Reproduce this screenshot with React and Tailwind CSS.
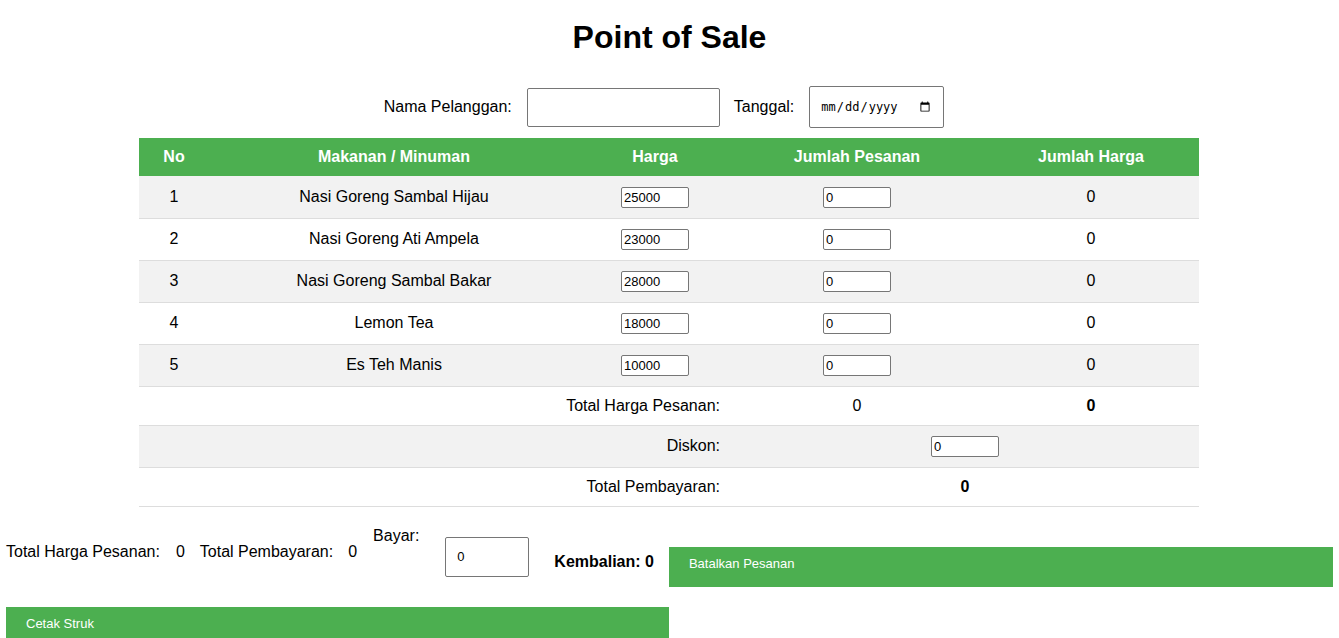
import { useState } from "react";

const menu = [
  { nama: "Nasi Goreng Sambal Hijau", harga: 25000 },
  { nama: "Nasi Goreng Ati Ampela", harga: 23000 },
  { nama: "Nasi Goreng Sambal Bakar", harga: 28000 },
  { nama: "Lemon Tea", harga: 18000 },
  { nama: "Es Teh Manis", harga: 10000 },
];

const cellInput =
  "w-[68px] h-[21px] border border-[#767676] rounded-[2px] px-[2px] text-[13px] bg-white outline-none";

export default function App() {
  const [harga, setHarga] = useState(menu.map((m) => m.harga));
  const [jumlah, setJumlah] = useState(menu.map(() => 0));
  const [diskon, setDiskon] = useState(0);
  const [bayar, setBayar] = useState(0);

  const subtotal = menu.map((_, i) => Number(harga[i]) * Number(jumlah[i]));
  const totalHarga = subtotal.reduce((a, b) => a + b, 0);
  const totalPesanan = jumlah.reduce((a, b) => a + Number(b), 0);
  const totalBayar = totalHarga - Number(diskon);
  const kembalian = Number(bayar) - totalBayar;

  return (
    <div className="font-['Liberation_Sans',Arial,sans-serif] text-black text-[16px] bg-white min-h-[638px] overflow-hidden">
      <h1 className="text-center text-[32px] font-bold leading-[37px] pt-[19px]">Point of Sale</h1>

      <div className="flex items-center justify-center mt-[30px] h-[42px] pr-[11px]">
        <label className="mr-[15px]">Nama Pelanggan:</label>
        <input type="text" className="w-[193px] h-[39px] border border-[#767676] rounded-[2px] px-2 outline-none" />
        <label className="ml-[14px] mr-[15px]">Tanggal:</label>
        <input
          type="date"
          className="w-[135px] h-[42px] border border-[#767676] rounded-[2px] px-[10px] font-['DejaVu_Sans_Mono',monospace] text-[12px] outline-none"
        />
      </div>

      <table className="ml-[139px] mt-[10px] w-[1060px] table-fixed border-collapse">
        <colgroup>
          <col className="w-[70px]" />
          <col className="w-[370px]" />
          <col className="w-[152px]" />
          <col className="w-[252px]" />
          <col className="w-[216px]" />
        </colgroup>
        <thead>
          <tr className="bg-[#4CAF50] text-white font-bold h-[38px]">
            <th>No</th>
            <th>Makanan / Minuman</th>
            <th>Harga</th>
            <th>Jumlah Pesanan</th>
            <th>Jumlah Harga</th>
          </tr>
        </thead>
        <tbody className="text-center">
          {menu.map((m, i) => (
            <tr key={i} className={`h-[42px] border-b border-[#ddd] ${i % 2 === 0 ? "bg-[#f2f2f2]" : "bg-white"}`}>
              <td>{i + 1}</td>
              <td>{m.nama}</td>
              <td>
                <input
                  type="text"
                  value={harga[i]}
                  onChange={(e) => setHarga(harga.map((h, j) => (j === i ? e.target.value : h)))}
                  className={cellInput}
                />
              </td>
              <td>
                <input
                  type="text"
                  value={jumlah[i]}
                  onChange={(e) => setJumlah(jumlah.map((h, j) => (j === i ? e.target.value : h)))}
                  className={cellInput}
                />
              </td>
              <td>{subtotal[i]}</td>
            </tr>
          ))}
          <tr className="h-[39px] border-b border-[#ddd] bg-white">
            <td colSpan={3} className="text-right pr-[11px]">Total Harga Pesanan:</td>
            <td>{totalPesanan}</td>
            <td className="font-bold">{totalHarga}</td>
          </tr>
          <tr className="h-[42px] border-b border-[#ddd] bg-[#f2f2f2]">
            <td colSpan={3} className="text-right pr-[11px]">Diskon:</td>
            <td colSpan={2}>
              <input type="text" value={diskon} onChange={(e) => setDiskon(e.target.value)} className={cellInput} />
            </td>
          </tr>
          <tr className="h-[39px] border-b border-[#ddd] bg-white">
            <td colSpan={3} className="text-right pr-[11px]">Total Pembayaran:</td>
            <td colSpan={2} className="font-bold">{totalBayar}</td>
          </tr>
        </tbody>
      </table>

      <div className="px-[6px] mt-[19px]">
        <div className="flex items-start whitespace-nowrap">
          <span className="mt-[17px] leading-[18px]">Total Harga Pesanan:</span>
          <span className="mt-[17px] leading-[18px] ml-[16px]">{totalHarga}</span>
          <span className="mt-[17px] leading-[18px] ml-[15px]">Total Pembayaran:</span>
          <span className="mt-[17px] leading-[18px] ml-[15px]">{totalBayar}</span>
          <label className="mt-[1px] leading-[18px] ml-[16px]">Bayar:</label>
          <input
            type="text"
            value={bayar}
            onChange={(e) => setBayar(e.target.value)}
            className="ml-[26px] mt-[11px] w-[84px] h-[40px] border border-[#767676] rounded-[2px] px-[11px] text-[13px] outline-none"
          />
          <span className="ml-[25px] mt-[27px] leading-[18px] font-bold">Kembalian: {kembalian}</span>
          <button className="ml-[15px] mt-[21px] flex-1 h-[40px] bg-[#4CAF50] text-white text-[13px] text-left pl-[20px] pb-[6px]">
            Batalkan Pesanan
          </button>
        </div>
        <button className="mt-[20px] w-[663px] h-[40px] bg-[#4CAF50] text-white text-[13px] text-left pl-[20px] pb-[6px]">
          Cetak Struk
        </button>
      </div>
    </div>
  );
}
